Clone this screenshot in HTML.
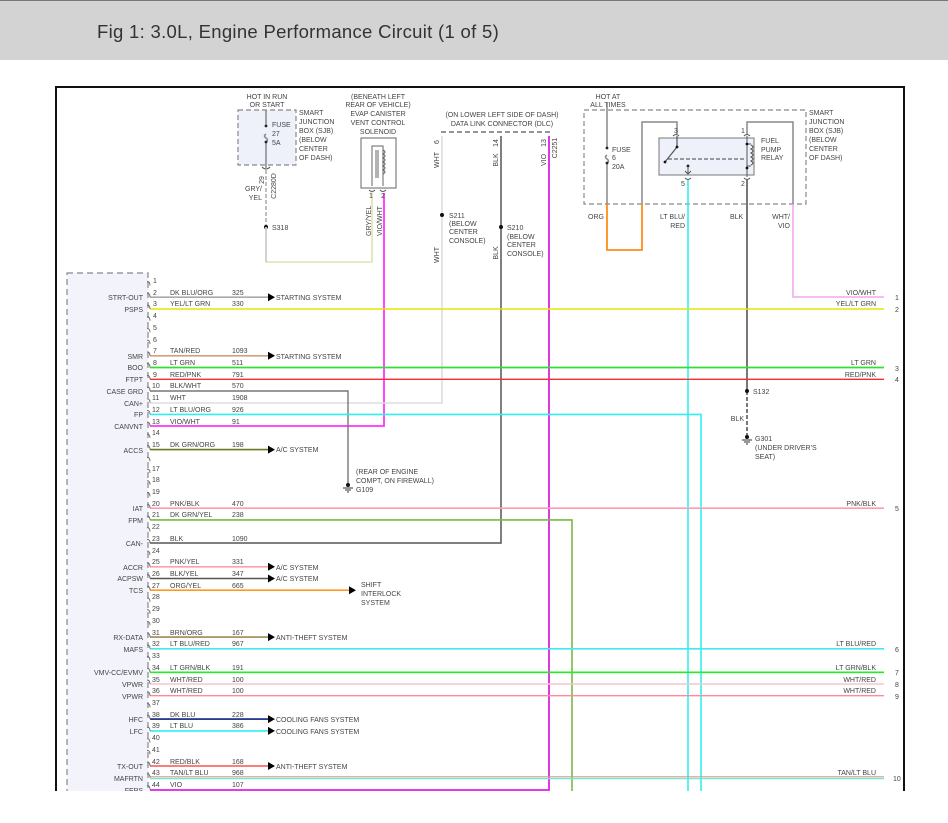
<!DOCTYPE html>
<html><head><meta charset="utf-8"><style>
html,body{margin:0;padding:0;background:#fff;width:948px;height:823px;overflow:hidden}
.hd{position:absolute;left:0;top:0;width:948px;height:60px;background:#d3d3d3;border-top:1px solid #777;box-sizing:border-box}
.hd span{position:absolute;left:97px;top:20px;font:18.5px "Liberation Sans",sans-serif;letter-spacing:0.3px;color:#333}
svg{position:absolute;left:0;top:0}
text{font-family:"Liberation Sans",sans-serif;font-size:7px;fill:#444}
.r{text-anchor:end}.m{text-anchor:middle}
</style></head><body>
<div class="hd"><span>Fig 1: 3.0L, Engine Performance Circuit (1 of 5)</span></div>
<svg width="948" height="823" viewBox="0 0 948 823">
<defs><clipPath id="c"><rect x="0" y="60" width="948" height="731"/></clipPath></defs>
<g clip-path="url(#c)">
<path d="M56 87H904M56 86V800M904 86V800" stroke="#111" stroke-width="2" fill="none"/>
<rect x="67" y="273" width="81" height="540" fill="#f3f3fc" stroke="#888" stroke-dasharray="6,4" stroke-width="1.2"/>

<rect x="238" y="110" width="58" height="55" fill="#eef0fa" stroke="#888" stroke-dasharray="5,3" stroke-width="1.2"/>
<path d="M266 110V126M266 134q-3 2 0 4q3 2 0 4M266 142V168" stroke="#888" stroke-width="1.5" fill="none"/>
<circle cx="266" cy="126" r="1.4" fill="#222"/><circle cx="266" cy="142" r="1.4" fill="#222"/>
<path d="M262 167q4 4 8 0" stroke="#555" fill="none"/>
<path d="M266 170V227" stroke="#aaa" stroke-width="1.5" stroke-dasharray="4,2"/>
<circle cx="266" cy="227" r="2" fill="#111"/>
<path d="M266 227V262H372V192" stroke="#e2e2b0" stroke-width="1.6" fill="none"/>
<path d="M266 227V262" stroke="#ccc" stroke-width="1.6"/>
<text x="267" y="99" class="m">HOT IN RUN</text><text x="267" y="107" class="m">OR START</text>
<text x="272" y="127">FUSE</text><text x="272" y="136">27</text><text x="272" y="145">5A</text>
<text x="299" y="115">SMART</text><text x="299" y="124">JUNCTION</text><text x="299" y="133">BOX (SJB)</text><text x="299" y="142">(BELOW</text><text x="299" y="151">CENTER</text><text x="299" y="160">OF DASH)</text>
<text transform="translate(264,180) rotate(-90)" class="m">29</text>
<text transform="translate(276,186) rotate(-90)" class="m">C2280D</text>
<text x="262" y="191" class="r">GRY/</text><text x="262" y="200" class="r">YEL</text>
<text x="272" y="230">S318</text>

<text x="378" y="99" class="m">(BENEATH LEFT</text><text x="378" y="107" class="m">REAR OF VEHICLE)</text><text x="378" y="116" class="m">EVAP CANISTER</text><text x="378" y="125" class="m">VENT CONTROL</text><text x="378" y="134" class="m">SOLENOID</text>
<rect x="361" y="138" width="35" height="50" fill="#fff" stroke="#666"/>
<path d="M372 186V146H383V186M376 150V178M378 150V178" stroke="#666" fill="none" stroke-width="1"/>
<path d="M383 150q4 2 0 4q4 2 0 4q4 2 0 4q4 2 0 4q4 2 0 4q4 2 0 4" stroke="#666" fill="none"/>
<path d="M369 190q3 3 6 0M380 190q3 3 6 0" stroke="#555" fill="none"/>
<path d="M384 193V426H150" stroke="#ff33ff" stroke-width="1.8" fill="none"/>
<text x="371" y="198" class="m">1</text><text x="383" y="198" class="m">2</text>
<text transform="translate(371,236) rotate(-90)">GRY/YEL</text>
<text transform="translate(382,236) rotate(-90)">VIO/WHT</text>

<text x="502" y="117" class="m">(ON LOWER LEFT SIDE OF DASH)</text><text x="502" y="126" class="m">DATA LINK CONNECTOR (DLC)</text>
<path d="M441 132H552" stroke="#555" stroke-width="1.2" stroke-dasharray="5,3"/>
<path d="M442 136V403H150" stroke="#ddd" stroke-width="1.6" fill="none"/>
<path d="M501 136V543H150" stroke="#555" stroke-width="1.5" fill="none"/>
<path d="M549 136V790H150" stroke="#dd22dd" stroke-width="1.8" fill="none"/>
<text transform="translate(439,142) rotate(-90)" class="m">6</text>
<text transform="translate(498,143) rotate(-90)" class="m">14</text>
<text transform="translate(546,143) rotate(-90)" class="m">13</text>
<text transform="translate(557,148) rotate(-90)" class="m">C2251</text>
<text transform="translate(439,160) rotate(-90)" class="m">WHT</text>
<text transform="translate(498,160) rotate(-90)" class="m">BLK</text>
<text transform="translate(546,160) rotate(-90)" class="m">VIO</text>
<text transform="translate(439,255) rotate(-90)" class="m">WHT</text>
<text transform="translate(498,253) rotate(-90)" class="m">BLK</text>
<circle cx="442" cy="215" r="2" fill="#111"/><circle cx="501" cy="227" r="2" fill="#111"/>
<text x="449" y="218">S211</text><text x="449" y="226">(BELOW</text><text x="449" y="234">CENTER</text><text x="449" y="243">CONSOLE)</text>
<text x="507" y="230">S210</text><text x="507" y="239">(BELOW</text><text x="507" y="247">CENTER</text><text x="507" y="256">CONSOLE)</text>

<text x="608" y="99" class="m">HOT AT</text><text x="608" y="107" class="m">ALL TIMES</text>
<rect x="584" y="110" width="222" height="94" fill="none" stroke="#888" stroke-dasharray="5,3" stroke-width="1.2"/>
<path d="M607 102V148M607 155q-3 2 0 4q3 2 0 4M607 163V204" stroke="#888" stroke-width="1.5" fill="none"/>
<circle cx="607" cy="148" r="1.4" fill="#222"/><circle cx="607" cy="163" r="1.4" fill="#222"/>
<text x="612" y="152">FUSE</text><text x="612" y="160">6</text><text x="612" y="169">20A</text>
<text x="809" y="115">SMART</text><text x="809" y="124">JUNCTION</text><text x="809" y="133">BOX (SJB)</text><text x="809" y="142">(BELOW</text><text x="809" y="151">CENTER</text><text x="809" y="160">OF DASH)</text>
<path d="M607 204V250H642V204" stroke="#ff8c1a" stroke-width="1.8" fill="none"/>
<path d="M642 204V122H677V134M747 134V122H793V204" stroke="#888" stroke-width="1.5" fill="none"/>
<path d="M793 204V297H884" stroke="#f0a8f0" stroke-width="1.6" fill="none"/>
<rect x="659" y="138" width="95" height="37" fill="#eef0fa" stroke="#777"/>
<path d="M673 136q3 -3 6 0M744 136q3 -3 6 0M685 178q3 3 6 0M744 178q3 3 6 0" stroke="#555" fill="none"/>
<path d="M677 136V147M665 162L677 147" stroke="#555" stroke-width="1.2" fill="none"/>
<path d="M668 159H744" stroke="#666" stroke-width="1.3" stroke-dasharray="4,2"/>
<circle cx="677" cy="147" r="1.4" fill="#111"/><circle cx="665" cy="162" r="1.4" fill="#111"/>
<path d="M747 136V177M751 145q4 2 0 4q4 2 0 4q4 2 0 4q4 2 0 4q4 2 0 4M747 144H751M747 166H751" stroke="#555" fill="none"/>
<circle cx="747" cy="144" r="1.4" fill="#111"/><circle cx="747" cy="168" r="1.4" fill="#111"/>
<circle cx="688" cy="166" r="1.4" fill="#111"/><path d="M688 166V174M685 171l3 3l3-3" stroke="#555" fill="none"/>
<path d="M688 180V800" stroke="#33eeee" stroke-width="1.6"/>
<path d="M747 180V391" stroke="#555" stroke-width="1.6"/>
<path d="M747 391V437" stroke="#333" stroke-width="1.3" stroke-dasharray="4,2"/>
<circle cx="747" cy="391" r="2" fill="#111"/>
<text x="676" y="133" class="m">3</text><text x="741" y="133">1</text>
<text x="683" y="186" class="m">5</text><text x="741" y="186">2</text>
<text x="761" y="143">FUEL</text><text x="761" y="152">PUMP</text><text x="761" y="160">RELAY</text>
<text x="588" y="219">ORG</text>
<text x="685" y="219" class="r">LT BLU/</text><text x="685" y="228" class="r">RED</text>
<text x="730" y="219">BLK</text>
<text x="790" y="219" class="r">WHT/</text><text x="790" y="228" class="r">VIO</text>
<text x="753" y="394">S132</text><text x="744" y="421" class="r">BLK</text>
<circle cx="747" cy="437" r="2" fill="#111"/><path d="M742 440H752M744 442H750M746 444H748" stroke="#333"/>
<text x="755" y="441">G301</text><text x="755" y="450">(UNDER DRIVER'S</text><text x="755" y="459">SEAT)</text>

<path d="M150 391H348V485" stroke="#777" stroke-width="1.4" fill="none"/>
<circle cx="348" cy="485" r="2" fill="#111"/><path d="M343 488H353M345 490H351M347 492H349" stroke="#333"/>
<text x="356" y="474">(REAR OF ENGINE</text><text x="356" y="483">COMPT, ON FIREWALL)</text><text x="356" y="492">G109</text>

<path d="M150 309H884" stroke="#e6e600" stroke-width="1.6"/>
<path d="M150 367.5H884" stroke="#33dd33" stroke-width="1.8"/>
<path d="M150 379.3H884" stroke="#ff2a2a" stroke-width="1.4"/>
<path d="M150 414.4H701V800" stroke="#33eeee" stroke-width="1.6" fill="none"/>
<path d="M150 508.2H884" stroke="#ff9cb4" stroke-width="1.6"/>
<path d="M150 519.9H572V800" stroke="#77bb44" stroke-width="1.6" fill="none"/>
<path d="M150 648.8H884" stroke="#44e8f0" stroke-width="1.6"/>
<path d="M150 672.3H884" stroke="#22ee22" stroke-width="1.6"/>
<path d="M150 684H884" stroke="#f6c6cc" stroke-width="1.4"/>
<path d="M150 695.7H884" stroke="#ff8a98" stroke-width="1.4"/>
<path d="M150 776.8H884" stroke="#b8a888" stroke-width="1.2"/><path d="M150 778.6H884" stroke="#7ee0d8" stroke-width="1.2"/>

<g stroke-width="1.6" fill="none">
<path d="M150 297.2H268" stroke="#aaa"/>
<path d="M150 355.8H268" stroke="#d2a080"/>
<path d="M150 449.6H268" stroke="#6a7a20"/>
<path d="M150 566.8H268" stroke="#ffa0a8"/>
<path d="M150 578.5H268" stroke="#555"/>
<path d="M150 590.2H349" stroke="#ff9922"/>
<path d="M150 637.1H268" stroke="#a08850"/>
<path d="M150 719.1H268" stroke="#102080"/>
<path d="M150 730.9H268" stroke="#33eeee"/>
<path d="M150 766H268" stroke="#ff5050"/>
</g>
<g fill="#000">
<path d="M268 293.2L275 297.2L268 301.2Z"/><path d="M268 351.8L275 355.8L268 359.8Z"/>
<path d="M268 445.6L275 449.6L268 453.6Z"/><path d="M268 562.8L275 566.8L268 570.8Z"/>
<path d="M268 574.5L275 578.5L268 582.5Z"/><path d="M349 586.2L356 590.2L349 594.2Z"/>
<path d="M268 633.1L275 637.1L268 641.1Z"/><path d="M268 715.1L275 719.1L268 723.1Z"/>
<path d="M268 726.9L275 730.9L268 734.9Z"/><path d="M268 762L275 766L268 770Z"/>
</g>
<text x="276" y="300">STARTING SYSTEM</text><text x="276" y="359">STARTING SYSTEM</text>
<text x="276" y="452">A/C SYSTEM</text><text x="276" y="570">A/C SYSTEM</text><text x="276" y="581">A/C SYSTEM</text>
<text x="361" y="587">SHIFT</text><text x="361" y="596">INTERLOCK</text><text x="361" y="605">SYSTEM</text>
<text x="276" y="640">ANTI-THEFT SYSTEM</text><text x="276" y="722">COOLING FANS SYSTEM</text><text x="276" y="734">COOLING FANS SYSTEM</text><text x="276" y="769">ANTI-THEFT SYSTEM</text>

<text x="876" y="295" class="r">VIO/WHT</text><text x="876" y="306" class="r">YEL/LT GRN</text>
<text x="876" y="365" class="r">LT GRN</text><text x="876" y="377" class="r">RED/PNK</text>
<text x="876" y="506" class="r">PNK/BLK</text><text x="876" y="646" class="r">LT BLU/RED</text>
<text x="876" y="670" class="r">LT GRN/BLK</text><text x="876" y="682" class="r">WHT/RED</text><text x="876" y="693" class="r">WHT/RED</text>
<text x="876" y="775" class="r">TAN/LT BLU</text>
<g font-size="6.5"><text x="895" y="300">1</text><text x="895" y="312">2</text><text x="895" y="371">3</text><text x="895" y="382">4</text><text x="895" y="511">5</text><text x="895" y="652">6</text><text x="895" y="675">7</text><text x="895" y="687">8</text><text x="895" y="699">9</text><text x="893" y="781">10</text></g>

<g stroke="#666" fill="none" stroke-width="0.9">
<path d="M147 281.5q3 0 3 4M147 293.2q3 0 3 4M147 305q3 0 3 4M147 316.7q3 0 3 4M147 328.4q3 0 3 4M147 340.1q3 0 3 4M147 351.8q3 0 3 4M147 363.5q3 0 3 4M147 375.3q3 0 3 4M147 387q3 0 3 4M147 398.7q3 0 3 4M147 410.4q3 0 3 4M147 422.1q3 0 3 4M147 433.9q3 0 3 4M147 445.6q3 0 3 4M147 457.3q3 0 3 4M147 469q3 0 3 4M147 480.7q3 0 3 4M147 492.5q3 0 3 4M147 504.2q3 0 3 4M147 515.9q3 0 3 4M147 527.6q3 0 3 4M147 539.3q3 0 3 4M147 551.1q3 0 3 4M147 562.8q3 0 3 4M147 574.5q3 0 3 4M147 586.2q3 0 3 4M147 597.9q3 0 3 4M147 609.7q3 0 3 4M147 621.4q3 0 3 4M147 633.1q3 0 3 4M147 644.8q3 0 3 4M147 656.5q3 0 3 4M147 668.3q3 0 3 4M147 680q3 0 3 4M147 691.7q3 0 3 4M147 703.4q3 0 3 4M147 715.1q3 0 3 4M147 726.9q3 0 3 4M147 738.6q3 0 3 4M147 750.3q3 0 3 4M147 762q3 0 3 4M147 773.7q3 0 3 4M147 785.5q3 0 3 4"/>
</g>
<g font-size="6.5">
<text x="153" y="283">1</text><text x="153" y="295">2</text><text x="153" y="306">3</text><text x="153" y="318">4</text><text x="153" y="330">5</text><text x="153" y="342">6</text><text x="153" y="353">7</text><text x="153" y="365">8</text><text x="153" y="377">9</text><text x="152" y="388">10</text><text x="152" y="400">11</text><text x="152" y="412">12</text><text x="152" y="424">13</text><text x="152" y="435">14</text><text x="152" y="447">15</text><text x="152" y="471">17</text><text x="152" y="482">18</text><text x="152" y="494">19</text><text x="152" y="506">20</text><text x="152" y="517">21</text><text x="152" y="529">22</text><text x="152" y="541">23</text><text x="152" y="553">24</text><text x="152" y="564">25</text><text x="152" y="576">26</text><text x="152" y="588">27</text><text x="152" y="599">28</text><text x="152" y="611">29</text><text x="152" y="623">30</text><text x="152" y="635">31</text><text x="152" y="646">32</text><text x="152" y="658">33</text><text x="152" y="670">34</text><text x="152" y="682">35</text><text x="152" y="693">36</text><text x="152" y="705">37</text><text x="152" y="717">38</text><text x="152" y="728">39</text><text x="152" y="740">40</text><text x="152" y="752">41</text><text x="152" y="764">42</text><text x="152" y="775">43</text><text x="152" y="787">44</text>
</g>
<g>
<text x="170" y="295">DK BLU/ORG</text><text x="232" y="295">325</text>
<text x="170" y="306">YEL/LT GRN</text><text x="232" y="306">330</text>
<text x="170" y="353">TAN/RED</text><text x="232" y="353">1093</text>
<text x="170" y="365">LT GRN</text><text x="232" y="365">511</text>
<text x="170" y="377">RED/PNK</text><text x="232" y="377">791</text>
<text x="170" y="388">BLK/WHT</text><text x="232" y="388">570</text>
<text x="170" y="400">WHT</text><text x="232" y="400">1908</text>
<text x="170" y="412">LT BLU/ORG</text><text x="232" y="412">926</text>
<text x="170" y="424">VIO/WHT</text><text x="232" y="424">91</text>
<text x="170" y="447">DK GRN/ORG</text><text x="232" y="447">198</text>
<text x="170" y="506">PNK/BLK</text><text x="232" y="506">470</text>
<text x="170" y="517">DK GRN/YEL</text><text x="232" y="517">238</text>
<text x="170" y="541">BLK</text><text x="232" y="541">1090</text>
<text x="170" y="564">PNK/YEL</text><text x="232" y="564">331</text>
<text x="170" y="576">BLK/YEL</text><text x="232" y="576">347</text>
<text x="170" y="588">ORG/YEL</text><text x="232" y="588">665</text>
<text x="170" y="635">BRN/ORG</text><text x="232" y="635">167</text>
<text x="170" y="646">LT BLU/RED</text><text x="232" y="646">967</text>
<text x="170" y="670">LT GRN/BLK</text><text x="232" y="670">191</text>
<text x="170" y="682">WHT/RED</text><text x="232" y="682">100</text>
<text x="170" y="693">WHT/RED</text><text x="232" y="693">100</text>
<text x="170" y="717">DK BLU</text><text x="232" y="717">228</text>
<text x="170" y="728">LT BLU</text><text x="232" y="728">386</text>
<text x="170" y="764">RED/BLK</text><text x="232" y="764">168</text>
<text x="170" y="775">TAN/LT BLU</text><text x="232" y="775">968</text>
<text x="170" y="787">VIO</text><text x="232" y="787">107</text>
</g>
<g>
<text x="143" y="300" class="r">STRT-OUT</text><text x="143" y="312" class="r">PSPS</text>
<text x="143" y="359" class="r">SMR</text><text x="143" y="370" class="r">BOO</text><text x="143" y="382" class="r">FTPT</text>
<text x="143" y="394" class="r">CASE GRD</text><text x="143" y="406" class="r">CAN+</text><text x="143" y="417" class="r">FP</text><text x="143" y="429" class="r">CANVNT</text>
<text x="143" y="453" class="r">ACCS</text><text x="143" y="511" class="r">IAT</text><text x="143" y="523" class="r">FPM</text>
<text x="143" y="546" class="r">CAN-</text><text x="143" y="570" class="r">ACCR</text><text x="143" y="581" class="r">ACPSW</text><text x="143" y="593" class="r">TCS</text>
<text x="143" y="640" class="r">RX-DATA</text><text x="143" y="652" class="r">MAFS</text><text x="143" y="675" class="r">VMV-CC/EVMV</text>
<text x="143" y="687" class="r">VPWR</text><text x="143" y="699" class="r">VPWR</text><text x="143" y="722" class="r">HFC</text><text x="143" y="734" class="r">LFC</text>
<text x="143" y="769" class="r">TX-OUT</text><text x="143" y="781" class="r">MAFRTN</text><text x="143" y="793" class="r">FEPS</text>
</g>
</g>
</svg>
</body></html>
